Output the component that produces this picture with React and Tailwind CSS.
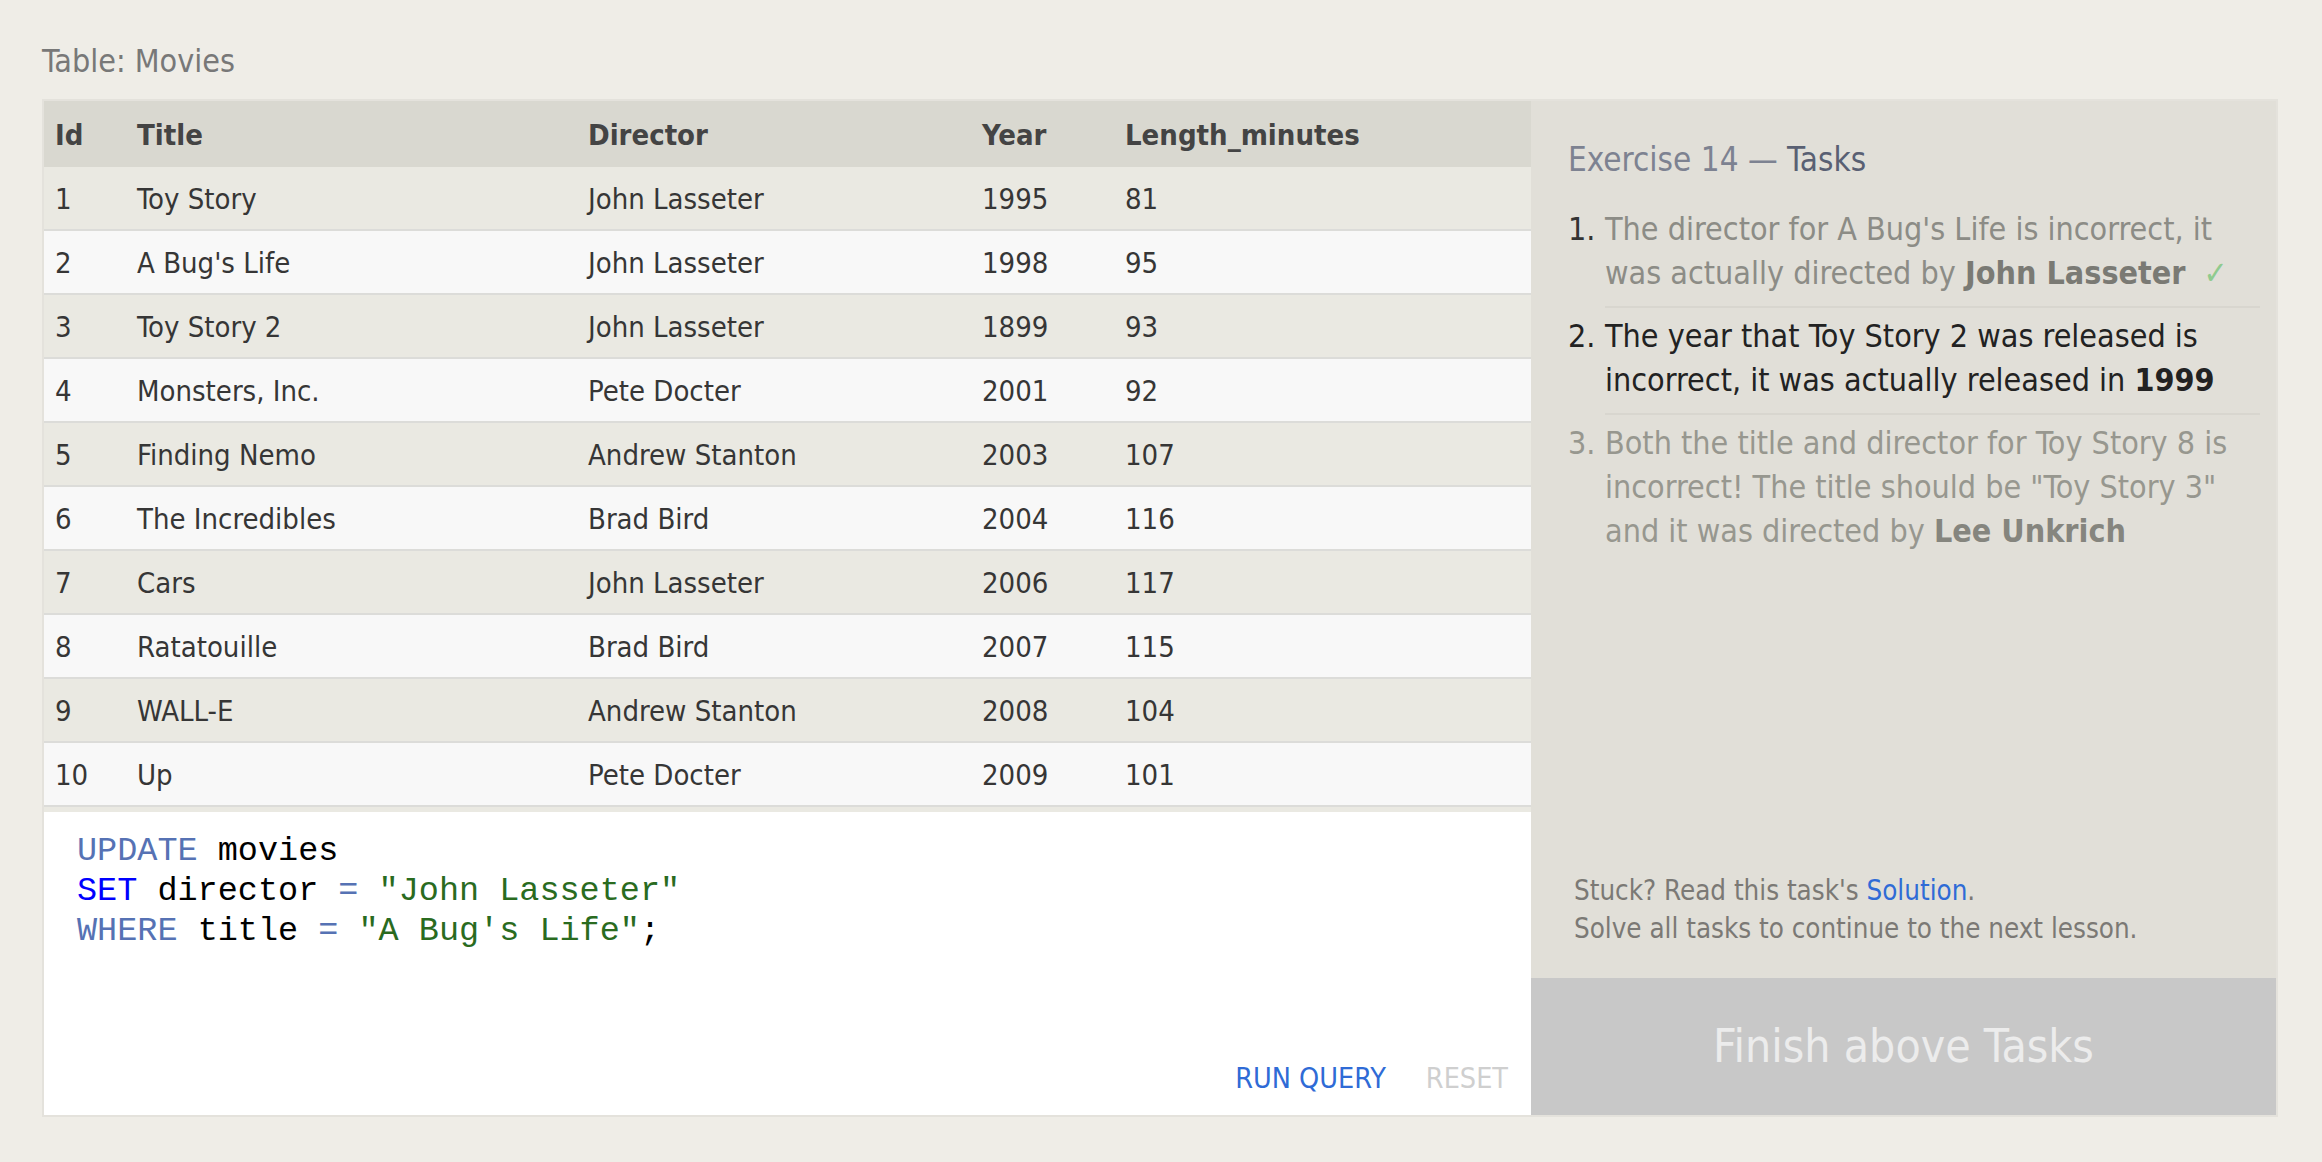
import React from 'react'

const movies = [
  [1, 'Toy Story', 'John Lasseter', 1995, 81],
  [2, "A Bug's Life", 'John Lasseter', 1998, 95],
  [3, 'Toy Story 2', 'John Lasseter', 1899, 93],
  [4, 'Monsters, Inc.', 'Pete Docter', 2001, 92],
  [5, 'Finding Nemo', 'Andrew Stanton', 2003, 107],
  [6, 'The Incredibles', 'Brad Bird', 2004, 116],
  [7, 'Cars', 'John Lasseter', 2006, 117],
  [8, 'Ratatouille', 'Brad Bird', 2007, 115],
  [9, 'WALL-E', 'Andrew Stanton', 2008, 104],
  [10, 'Up', 'Pete Docter', 2009, 101],
]

const cols = ['Id', 'Title', 'Director', 'Year', 'Length_minutes']

const rowGrid = 'grid grid-cols-[82px_451px_394px_143px_1fr] items-center'

function MovieTable() {
  return (
    <div>
      <div className={`${rowGrid} h-[66px] bg-[#d9d8d0] pt-[4px] text-[29px] font-bold text-[#444]`}>
        {cols.map((c) => (
          <div key={c} className="pl-[11px]">{c}</div>
        ))}
      </div>
      {movies.map((m, i) => (
        <div
          key={m[0]}
          className={`${rowGrid} h-[64px] border-b-2 border-[#dcdcd9] pt-[3px] text-[29px] text-[#363636] ${
            i % 2 === 0 ? 'bg-[#eae9e2]' : 'bg-[#f8f8f8]'
          }`}
        >
          {m.map((v, j) => (
            <div key={j} className="pl-[11px] whitespace-nowrap">{v}</div>
          ))}
        </div>
      ))}
    </div>
  )
}

function Editor() {
  const kw = 'text-[#5672b4]'
  const str = 'text-[#2a6b1f]'
  return (
    <div className="mt-[5px] flex h-[303px] flex-col bg-white">
      <pre className="pl-[33px] pt-[19px] text-[33.5px] leading-[40px] text-black [font-family:'Liberation_Mono',monospace]">
        <span className={kw}>UPDATE</span> movies{'\n'}
        <span className="text-[#0000ff]">SET</span> director <span className={kw}>=</span>{' '}
        <span className={str}>"John Lasseter"</span>{'\n'}
        <span className={kw}>WHERE</span> title <span className={kw}>=</span>{' '}
        <span className={str}>"A Bug's Life"</span>;
      </pre>
      <div className="mt-auto flex justify-end gap-[40px] pb-[18px] pr-[23px] text-[28.5px] leading-[36px]">
        <span className="text-[#2f6bd6]">RUN QUERY</span>
        <span className="text-[#cfcfcf]">RESET</span>
      </div>
    </div>
  )
}

function Task({ n, numClass, last, children }) {
  return (
    <li className="flex">
      <span className={`w-[37px] shrink-0 pt-[6px] ${numClass}`}>{n}.</span>
      <div className={`flex-1 pt-[6px] pb-[11px] ${last ? '' : 'border-b-2 border-[#d8d6cf]'}`}>
        {children}
      </div>
    </li>
  )
}

function TaskPanel() {
  return (
    <div className="flex flex-1 flex-col bg-[#e1dfd8]">
      <div className="pl-[37px] pr-[16px] pt-[39px]">
        <h3 className="text-[33px] leading-[40px]">
          <span className="text-[#7d8291]">Exercise 14 — </span>
          <span className="text-[#596073]">Tasks</span>
        </h3>
        <ol className="mt-[21px] text-[32px] leading-[44px]">
          <Task n={1} numClass="text-[#333]">
            <span className="text-[#8c8c86]">
              The director for A Bug's Life is incorrect, it
              <br />
              was actually directed by <b className="text-[#7a7a74]">John Lasseter</b>
              <span className="ml-[18px] text-[#8fcb8f]">✓</span>
            </span>
          </Task>
          <Task n={2} numClass="text-[#222]">
            <span className="text-[#222]">
              The year that Toy Story 2 was released is
              <br />
              incorrect, it was actually released in <b>1999</b>
            </span>
          </Task>
          <Task n={3} numClass="text-[#97978f]" last>
            <span className="text-[#97978f]">
              Both the title and director for Toy Story 8 is
              <br />
              incorrect! The title should be "Toy Story 3"
              <br />
              and it was directed by <b className="text-[#85857e]">Lee Unkrich</b>
            </span>
          </Task>
        </ol>
      </div>
      <div className="mt-auto pb-[31px] pl-[43px] text-[27.5px] leading-[38px] text-[#7b7975]">
        <p>
          Stuck? Read this task's <span className="text-[#2f6bd6]">Solution</span>.
        </p>
        <p>Solve all tasks to continue to the next lesson.</p>
      </div>
      <div className="flex h-[137px] items-center justify-center bg-[#c8c8c8] text-[46px] text-[#ececec]">
        Finish above Tasks
      </div>
    </div>
  )
}

export default function App() {
  return (
    <div className="min-h-screen bg-[#efede7] px-[42px] pt-[41px] [font-family:'DejaVu_Sans_Condensed','DejaVu_Sans',sans-serif]">
      <h2 className="mb-[18px] text-[32px] leading-[40px] text-[#787878]">Table: Movies</h2>
      <div className="flex w-[2236px] border-2 border-[#e4e2dc]">
        <div className="flex w-[1487px] shrink-0 flex-col bg-[#eae9e2]">
          <MovieTable />
          <Editor />
        </div>
        <TaskPanel />
      </div>
    </div>
  )
}
